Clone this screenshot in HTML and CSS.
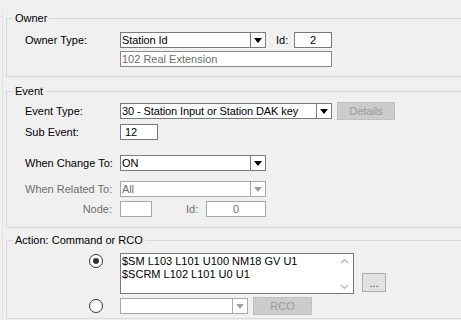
FILE: index.html
```html
<!DOCTYPE html>
<html lang="en">
<head>
    <title>Event Settings</title>
    <meta charset="utf-8">
    <link rel="stylesheet" href="styles.css">
</head>
<body>
    <div class="panel">
        <fieldset class="group owner">
            <legend>Owner</legend>
            <div class="row owner-type">
                <span class="lbl">Owner Type:</span>
                <div class="combo w146"><span class="val">Station Id</span><span class="drop"><i class="arrow"></i></span></div>
                <span class="id-lbl">Id:</span>
                <div class="box w38 center">2</div>
            </div>
            <div class="row owner-name">
                <span class="lbl"></span>
                <div class="box w212 readonly">102 Real Extension</div>
            </div>
        </fieldset>

        <fieldset class="group event">
            <legend>Event</legend>
            <div class="row event-type">
                <span class="lbl">Event Type:</span>
                <div class="combo w212"><span class="val">30 - Station Input or Station DAK key</span><span class="drop"><i class="arrow"></i></span></div>
                <button class="btn btn-off details">Details</button>
            </div>
            <div class="row sub-event">
                <span class="lbl">Sub Event:</span>
                <div class="box w38 pad">12</div>
            </div>
            <div class="row change-to">
                <span class="lbl">When Change To:</span>
                <div class="combo w146"><span class="val">ON</span><span class="drop"><i class="arrow"></i></span></div>
            </div>
            <div class="row related-to">
                <span class="lbl off">When Related To:</span>
                <div class="combo w146 off"><span class="val">All</span><span class="drop"><i class="arrow"></i></span></div>
            </div>
            <div class="row node">
                <span class="lbl off right">Node:</span>
                <div class="box w32 off"></div>
                <span class="node-id off">Id:</span>
                <div class="box w60 off center">0</div>
            </div>
        </fieldset>

        <fieldset class="group action">
            <legend>Action: Command or RCO</legend>
            <div class="row command">
                <span class="lbl"><span class="radio checked"></span></span>
                <div class="memo">
                    <div class="memo-text">$SM L103 L101 U100 NM18 GV U1<br>$SCRM L102 L101 U0 U1</div>
                    <div class="scroll">
                        <svg width="15" height="8" viewBox="0 0 15 8"><polyline points="4,6 7.5,2.5 11,6" fill="none" stroke="#b4b4b4" stroke-width="1.2"/></svg>
                        <svg width="15" height="8" viewBox="0 0 15 8"><polyline points="4,2 7.5,5.5 11,2" fill="none" stroke="#b4b4b4" stroke-width="1.2"/></svg>
                    </div>
                </div>
                <button class="btn more">...</button>
            </div>
            <div class="row rco">
                <span class="lbl"><span class="radio"></span></span>
                <div class="combo w128 off"><span class="val"></span><span class="drop"><i class="arrow"></i></span></div>
                <button class="btn btn-off rco-btn">RCO</button>
            </div>
        </fieldset>
    </div>
</body>
</html>
```

FILE: styles.css
```css
:root {
    --bg-color: #f0f0f0;
    --text-color: #000;
    --muted-color: #6d6d6d;
    --line-color: #d8d8d8;
    --field-border: #7a7a7a;
    --off-border: #a8a8a8;
}

* {
    margin: 0;
    padding: 0;
    box-sizing: border-box;
}

html, body {
    height: 100%;
    overflow: hidden;
}

body {
    font-family: 'Liberation Sans', Arial, sans-serif;
    font-size: 11px;
    line-height: 13px;
    color: var(--text-color);
    background-color: var(--bg-color);
}

.panel {
    margin-left: 2px;
    padding-left: 3px;
    border-left: 1px solid #e2e2e2;
    height: 100%;
}

.group {
    border: 1px solid var(--line-color);
    border-right: none;
    padding: 0;
}

.group legend {
    margin-left: 6px;
    padding: 0 2px;
    line-height: 13px;
}

.owner {
    margin-top: 12px;
    padding-bottom: 9px;
}

.event {
    margin-top: 8px;
    padding-bottom: 10px;
}

.action {
    margin-top: 6px;
    padding-bottom: 3px;
}

.row {
    display: flex;
    align-items: center;
    height: 16px;
}

.owner-type { margin-top: 7px; }
.owner-name { margin-top: 3px; }
.event-type { margin-top: 4px; height: 18px; }
.sub-event { margin-top: 4px; }
.change-to { margin-top: 15px; }
.related-to { margin-top: 10px; }
.node { margin-top: 4px; }
.command { margin-top: 6px; height: 41px; align-items: flex-start; }
.rco { margin-top: 3px; height: 18px; }

.lbl {
    flex: none;
    width: 113px;
    padding-left: 18px;
    white-space: nowrap;
}

.lbl.right {
    text-align: right;
    padding-right: 8px;
}

.off {
    color: var(--muted-color);
}

.w32 { width: 32px; }
.w38 { width: 38px; }
.w60 { width: 60px; }
.w128 { width: 128px; }
.w146 { width: 146px; }
.w212 { width: 212px; }

.box {
    flex: none;
    height: 16px;
    background: #fff;
    border: 1px solid var(--field-border);
    padding: 0 2px;
    line-height: 14px;
    white-space: nowrap;
}

.box.center {
    text-align: center;
}

.box.pad {
    padding-left: 4px;
}

.box.readonly {
    color: var(--muted-color);
    border-color: #8a8a8a;
    padding-left: 1px;
}

.box.off {
    border-color: var(--off-border);
}

.combo {
    flex: none;
    display: flex;
    height: 16px;
    background: #fff;
    border: 1px solid var(--field-border);
    line-height: 14px;
}

.combo .val {
    flex: 1;
    padding-left: 1px;
    white-space: nowrap;
    overflow: hidden;
    letter-spacing: -0.1px;
}

.combo .drop {
    flex: none;
    width: 15px;
    border-left: 1px solid var(--field-border);
    display: flex;
    align-items: center;
    justify-content: center;
}

.arrow {
    width: 0;
    height: 0;
    border-left: 4px solid transparent;
    border-right: 4px solid transparent;
    border-top: 5px solid #000;
    margin-top: 1px;
}

.combo.off {
    border-color: var(--off-border);
}

.combo.off .drop {
    border-left-color: var(--off-border);
}

.combo.off .arrow {
    border-top-color: #a0a0a0;
}

.id-lbl {
    margin-left: 10px;
    width: 18px;
}

.node-id {
    margin-left: 34px;
    width: 20px;
}

.btn {
    flex: none;
    font: inherit;
    line-height: 14px;
    background: #e1e1e1;
    border: 1px solid #adadad;
    color: #333;
}

.btn-off {
    background: #cccccc;
    border-color: #bfbfbf;
    color: #9a9a9a;
}

.details {
    margin-left: 5px;
    width: 58px;
    height: 18px;
}

.rco-btn {
    margin-left: 5px;
    width: 59px;
    height: 18px;
}

.more {
    margin-left: 8px;
    margin-top: 20px;
    width: 24px;
    height: 19px;
}

.radio {
    display: flex;
    align-items: center;
    justify-content: center;
    width: 14px;
    height: 14px;
    margin-left: 64px;
    border: 1px solid #333;
    border-radius: 50%;
    background: #fff;
}

.command .radio {
    margin-top: 1px;
}

.radio.checked::after {
    content: "";
    width: 6px;
    height: 6px;
    border-radius: 50%;
    background: #333;
}

.memo {
    flex: none;
    display: flex;
    width: 234px;
    height: 41px;
    background: #fff;
    border: 1px solid var(--field-border);
}

.memo-text {
    flex: 1;
    padding: 1px 0 0 1px;
    white-space: nowrap;
}

.scroll {
    flex: none;
    width: 17px;
    display: flex;
    flex-direction: column;
    justify-content: space-between;
    align-items: center;
    padding: 3px 0 2px;
}
```
